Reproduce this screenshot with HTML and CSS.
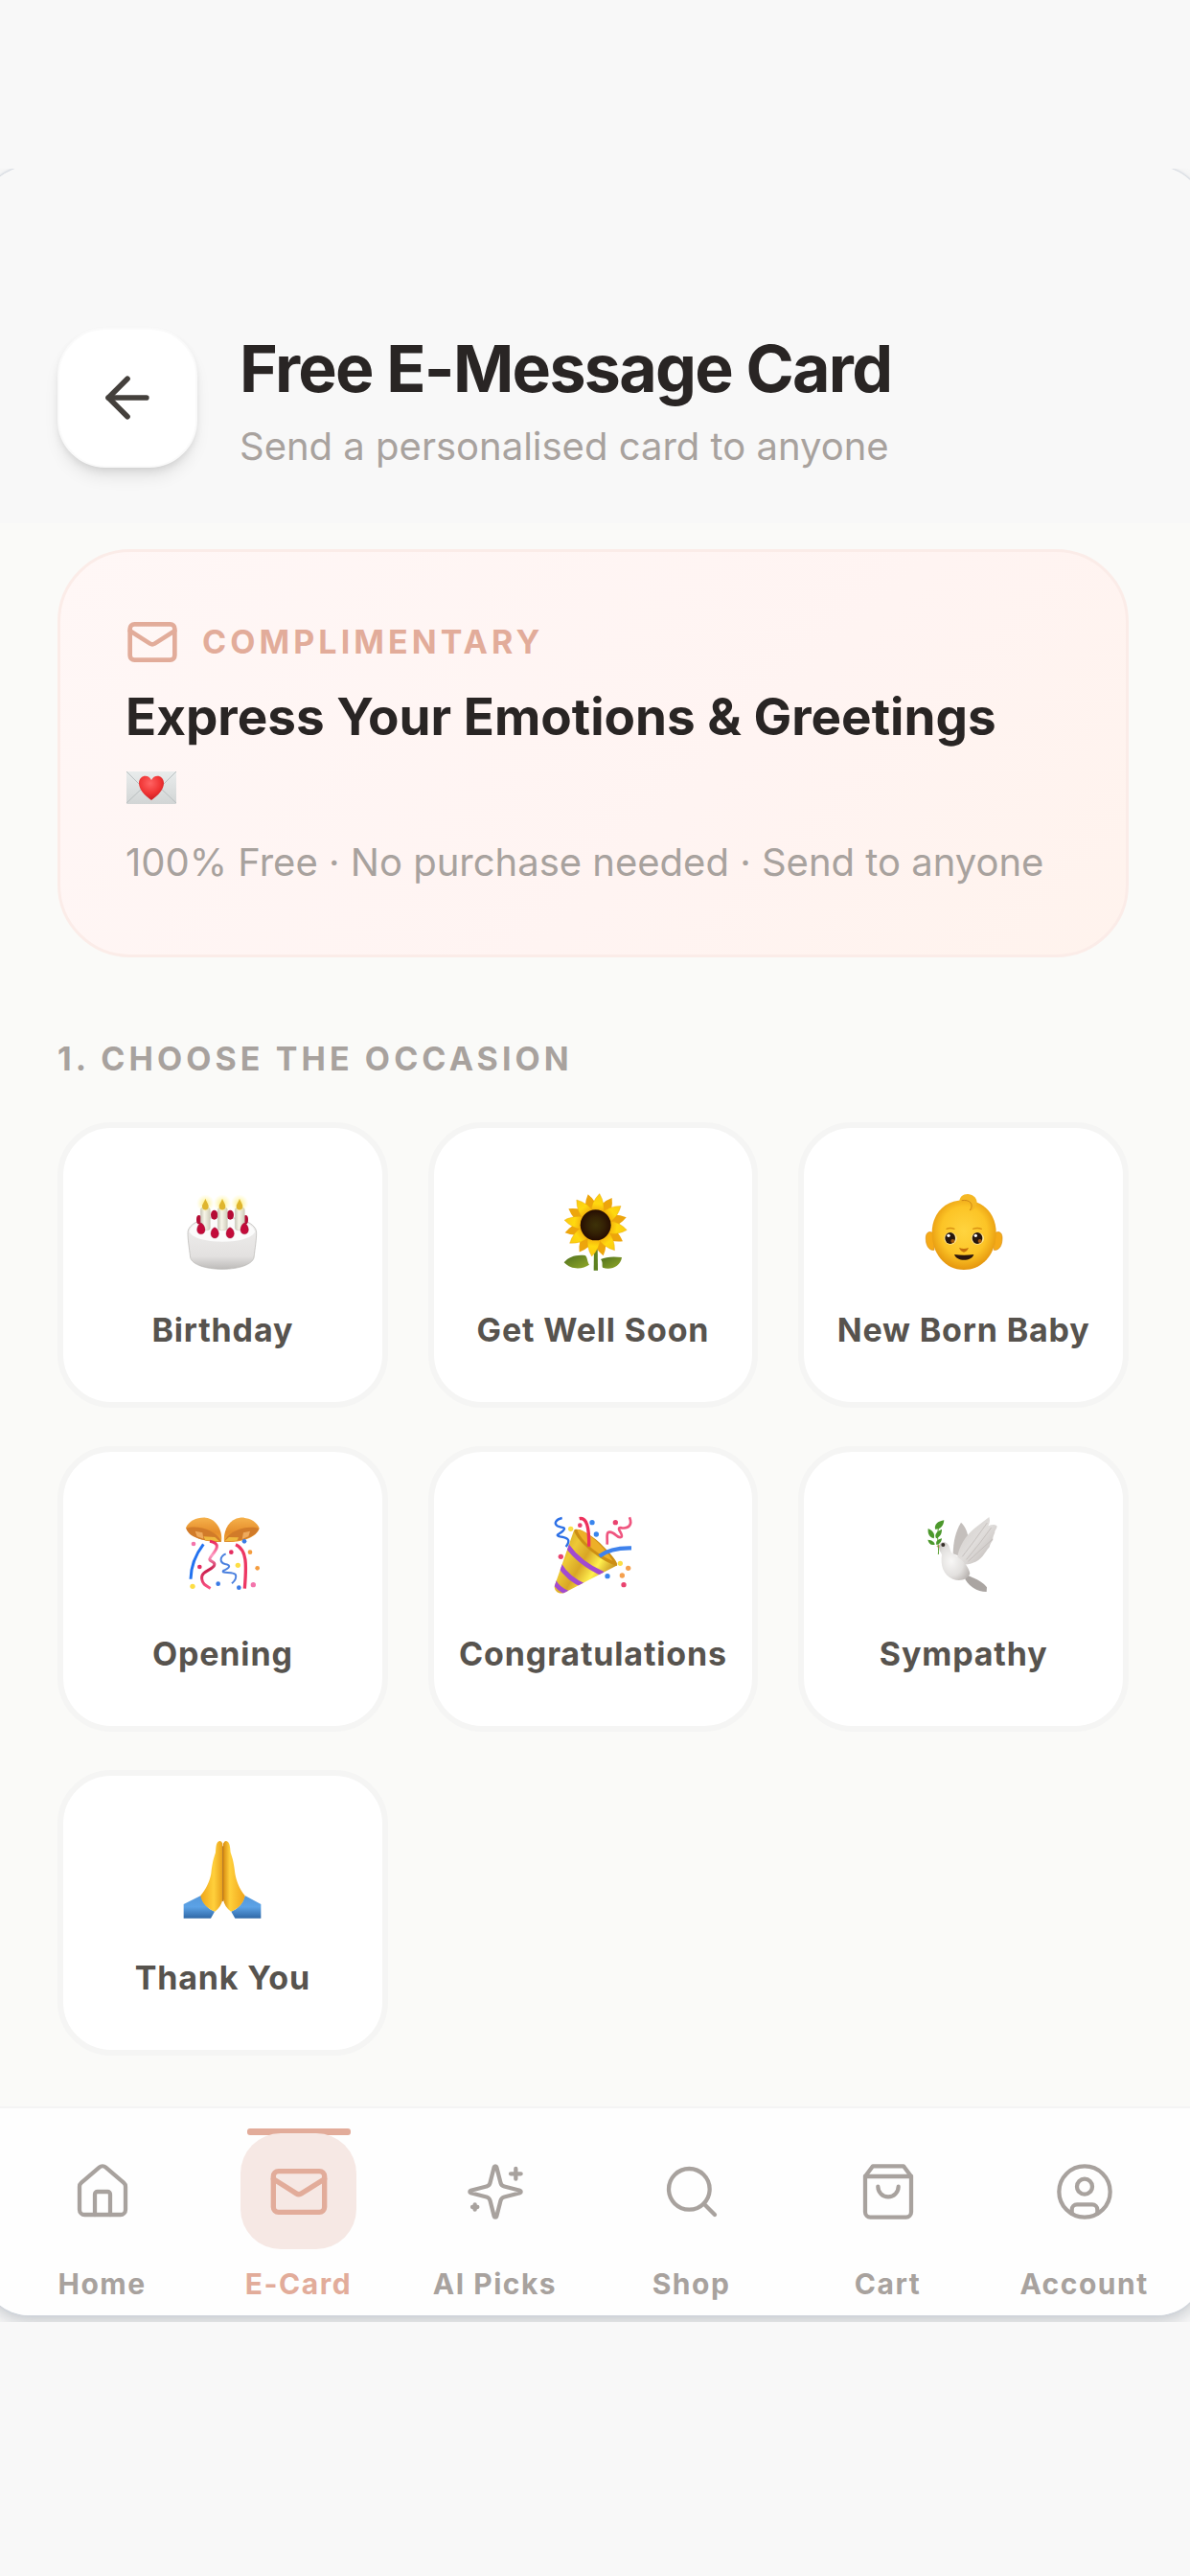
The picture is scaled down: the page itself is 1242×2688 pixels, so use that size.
FILE: index.html
```html
<!DOCTYPE html>
<html lang="en">
<head>
<meta charset="utf-8">
<meta name="viewport" content="width=device-width, initial-scale=1">
<title>Free E-Message Card</title>
<link rel="stylesheet" href="styles.css">
</head>
<body>
<div class="stage">
  <div class="phone">
    <header class="header">
      <button class="back" type="button" aria-label="Back">
        <svg class="icon icon-back" viewBox="0 0 24 24"><path d="m12 19-7-7 7-7"/><path d="M19 12H5"/></svg>
      </button>
      <div class="heading">
        <h1 class="title">Free E-Message Card</h1>
        <p class="subtitle">Send a personalised card to anyone</p>
      </div>
    </header>

    <main class="content">
      <section class="banner">
        <p class="eyebrow">
          <svg class="icon icon-mail" viewBox="0 0 24 24"><rect x="2" y="4" width="20" height="16" rx="2"/><path d="m22 7-8.97 5.7a1.94 1.94 0 0 1-2.06 0L2 7"/></svg>
          COMPLIMENTARY
        </p>
        <h2 class="banner-title">Express Your Emotions &amp; Greetings
          <svg class="letter" viewBox="0 0 54 36" role="img" aria-label="Love letter">
            <defs>
              <linearGradient id="paper" x1="0" y1="0" x2="0" y2="1"><stop offset="0" stop-color="#e9ecec"/><stop offset="1" stop-color="#d2d5d5"/></linearGradient>
              <radialGradient id="heart" cx=".45" cy=".3" r=".7"><stop offset="0" stop-color="#ff6363"/><stop offset=".6" stop-color="#f03434"/><stop offset="1" stop-color="#c91c22"/></radialGradient>
            </defs>
            <rect x="1" y="1" width="52" height="34" rx="1" fill="url(#paper)"/>
            <path d="M1 34 20 16M53 34 34 16M1 1l21 21q5 4 10 0L53 1" fill="none" stroke="#b9bfc0" stroke-width="1"/>
            <path d="M27 31C20 26 14 20 14 13c0-8 10-10 13-3 3-7 13-5 13 3 0 7-6 13-13 18z" fill="url(#heart)"/>
          </svg>
        </h2>
        <p class="banner-text">100% Free · No purchase needed · Send to anyone</p>
      </section>

      <h2 class="section-title">1. CHOOSE THE OCCASION</h2>

      <div class="grid">
        <button class="tile" type="button">
          <svg class="emoji" viewBox="61 63 252 252" aria-hidden="true">
            <defs>
              <linearGradient id="cake" x1="0" y1="0" x2="0" y2="1"><stop offset="0" stop-color="#f1f0ef"/><stop offset=".75" stop-color="#e3e1e0"/><stop offset="1" stop-color="#bdbbb9"/></linearGradient>
              <linearGradient id="candle" x1="0" y1="0" x2="1" y2="0"><stop offset="0" stop-color="#c9c7b8"/><stop offset=".4" stop-color="#f7f5e8"/><stop offset="1" stop-color="#d0cdbb"/></linearGradient>
              <radialGradient id="glow"><stop offset="0" stop-color="#ffe94f" stop-opacity=".8"/><stop offset="1" stop-color="#fff59a" stop-opacity="0"/></radialGradient>
            </defs>
            <path d="M79 193c0-28 45-49 107-49s108 21 108 49c0 22-4 45-8 78-5 21-46 36-99 36s-95-15-100-36c-4-33-8-56-8-78z" fill="url(#cake)" stroke="#b5b3b1" stroke-width="2"/>
            <path d="M84 190c3-23 44-42 102-42s99 19 103 42c-8 20-52 31-103 31S93 210 84 190z" fill="#fbfbfb"/>
            <g fill="#b50b35"><ellipse cx="114" cy="152" rx="8" ry="14"/><ellipse cx="162" cy="137" rx="11" ry="15"/><ellipse cx="212" cy="137" rx="11" ry="15"/><ellipse cx="260" cy="152" rx="8" ry="14"/></g>
            <g fill="url(#candle)" stroke="#bcb9a8"><rect x="119" y="114" width="30" height="71" rx="8"/><rect x="173" y="114" width="30" height="71" rx="8"/><rect x="227" y="114" width="30" height="71" rx="8"/></g>
            <g fill="url(#glow)"><circle cx="134" cy="101" r="28"/><circle cx="187" cy="101" r="28"/><circle cx="241" cy="101" r="28"/></g>
            <g fill="#dfb52d"><path d="M134 86c5 13 11 18 10 26-1 13-19 13-20 0-1-8 6-13 10-26z"/><path d="M187 86c5 13 11 18 10 26-1 13-19 13-20 0-1-8 6-13 10-26z"/><path d="M241 86c5 13 11 18 10 26-1 13-19 13-20 0-1-8 6-13 10-26z"/></g>
            <g fill="#c30b3a" stroke="#8c0829" stroke-width="1"><path d="M120 162c8 3 13 13 13 22 0 18-25 18-25 0 0-9 5-19 12-22z"/><path d="M163 176c8 3 13 11 13 20 0 19-25 19-25 0 0-9 5-17 12-20z"/><path d="M211 176c8 3 13 11 13 20 0 19-25 19-25 0 0-9 5-17 12-20z"/><path d="M256 162c8 3 13 13 13 22 0 18-25 18-25 0 0-9 5-19 12-22z"/></g>
          </svg>
          <span class="label">Birthday</span>
        </button>

        <button class="tile" type="button">
          <svg class="emoji" viewBox="52 63 252 252" aria-hidden="true">
            <defs>
              <linearGradient id="petal" x1="0" y1="1" x2="0" y2="0"><stop offset="0" stop-color="#f0a00c"/><stop offset=".5" stop-color="#ffd90f"/><stop offset="1" stop-color="#f9c914"/></linearGradient>
              <radialGradient id="seed"><stop offset="0" stop-color="#3d3208"/><stop offset=".5" stop-color="#352305"/><stop offset="1" stop-color="#260d02"/></radialGradient>
              <linearGradient id="leaf" x1="0" y1="0" x2="1" y2="1"><stop offset="0" stop-color="#4f7020"/><stop offset="1" stop-color="#92a928"/></linearGradient>
              <path id="ray" d="M166 134q-2-36 20-64 22 28 20 64z"/>
              <path id="ray-lit" d="M166 134q-2-36 20-64 22 28 20 64z" fill="url(#petal)"/>
            </defs>
            <path d="M181 230h11l1 81h-13z" fill="#5d8120"/>
            <path d="M87 286c14-18 40-26 66-22 8 5 6 20 13 29-21 15-55 18-79-7z" fill="url(#leaf)"/>
            <path d="M202 276c16-7 36-10 66-6-4 30-36 41-60 32-3-7 2-16-6-26z" fill="url(#leaf)"/>
            <g fill="#eda50c">
              <use href="#ray" transform="rotate(-14 186 169)"/><use href="#ray" transform="rotate(31 186 169)"/><use href="#ray" transform="rotate(76 186 169)"/><use href="#ray" transform="rotate(121 186 169)"/><use href="#ray" transform="rotate(166 186 169)"/><use href="#ray" transform="rotate(211 186 169)"/><use href="#ray" transform="rotate(256 186 169)"/><use href="#ray" transform="rotate(301 186 169)"/>
            </g>
            <g stroke="#e5a00a" stroke-width="1">
              <use href="#ray-lit" transform="rotate(7 186 169)"/><use href="#ray-lit" transform="rotate(53 186 169)"/><use href="#ray-lit" transform="rotate(99 186 169)"/><use href="#ray-lit" transform="rotate(143 186 169)"/><use href="#ray-lit" transform="rotate(187 186 169)"/><use href="#ray-lit" transform="rotate(235 186 169)"/><use href="#ray-lit" transform="rotate(279 186 169)"/><use href="#ray-lit" transform="rotate(323 186 169)"/>
            </g>
            <circle cx="186" cy="169" r="48" fill="url(#seed)"/>
          </svg>
          <span class="label">Get Well Soon</span>
        </button>

        <button class="tile" type="button">
          <svg class="emoji" viewBox="1213 63 252 252" aria-hidden="true">
            <defs>
              <radialGradient id="skin" cx=".5" cy=".45" r=".55"><stop offset="0" stop-color="#ffd43f"/><stop offset=".65" stop-color="#fcc426"/><stop offset="1" stop-color="#e5960e"/></radialGradient>
            </defs>
            <g fill="#f5aa18" stroke="#d98d0d" stroke-width="2"><path d="M1243 194c-14-8-23-1-23 16 0 23 9 39 26 37z"/><path d="M1436 194c14-8 23-1 23 16 0 23-9 39-26 37z"/></g>
            <path d="M1339 91c66 0 101 48 101 102 0 64-40 116-101 116s-100-52-100-116c0-54 35-102 100-102z" fill="url(#skin)"/>
            <path d="M1325 96c0-16 13-25 27-24 18 1 31 17 27 31-2 11-10 19-21 22 9-14 5-26-11-30-8-2-14-1-22 1z" fill="#f5b824"/>
            <path d="M1332 92c25-4 40 11 26 31" fill="none" stroke="#cf8615" stroke-width="3"/>
            <g fill="none" stroke="#d99112" stroke-width="4" stroke-linecap="round"><path d="M1285 181q11-5 24 0M1368 181q13-5 26 0"/></g>
            <g fill="#ffe591"><ellipse cx="1297" cy="211" rx="20" ry="19"/><ellipse cx="1382" cy="211" rx="20" ry="19"/></g>
            <g fill="#26160c"><ellipse cx="1296" cy="210" rx="16" ry="18"/><ellipse cx="1381" cy="210" rx="16" ry="18"/></g>
            <g fill="#a2570d"><circle cx="1304" cy="219" r="6"/><circle cx="1389" cy="219" r="6"/></g>
            <g fill="#fff"><circle cx="1291" cy="202" r="5"/><circle cx="1376" cy="202" r="5"/></g>
            <path d="M1324 240q8 3 15 3t15-3q-5 12-15 14-10-2-15-14z" fill="#c56f0c"/>
            <path d="M1309 261q30 5 61 0c-5 22-54 24-61 0z" fill="#2b160d"/>
          </svg>
          <span class="label">New Born Baby</span>
        </button>

        <button class="tile" type="button">
          <svg class="emoji" viewBox="61 60 252 252" aria-hidden="true">
            <defs>
              <linearGradient id="bowl" x1="0" y1="0" x2="0" y2="1"><stop offset="0" stop-color="#f5b14b"/><stop offset=".6" stop-color="#e58d2b"/><stop offset="1" stop-color="#f0a735"/></linearGradient>
              <linearGradient id="ribbon" x1="0" y1="0" x2="0" y2="1"><stop offset="0" stop-color="#e9265c"/><stop offset=".3" stop-color="#ff9cc4"/><stop offset=".6" stop-color="#c81e4c"/><stop offset="1" stop-color="#fb5384"/></linearGradient>
            </defs>
            <path d="M73 100c9-22 36-34 62-32 34 3 54 42 49 75-30 5-96-7-111-43z" fill="url(#bowl)"/>
            <path d="M303 101c-8-22-34-35-61-33-34 3-53 42-49 75 30 5 98-5 110-42z" fill="url(#bowl)"/>
            <g fill="#d17b29"><path d="M74 101c34-12 95 5 110 42-39 1-102-9-110-42z"/><path d="M302 102c-32-12-94 4-109 41 38 1 99-10 109-41z"/></g>
            <g fill="#eeaa5c"><path d="M102 110l23 5 3 19-20-7zM274 110l-21 5-4 20 20-8z"/></g>
            <path d="M128 127l36 2 14 13-44-3zM194 142l14-13 30 1-5 10z" fill="#efb93e"/>
            <path d="M128 151q-39 51-40 109" fill="none" stroke="#2373f0" stroke-width="9"/>
            <path d="M148 142c42 8 13 34 2 50s18 10 12 25-43 18-39 43c2 17 13 21 27 29" fill="none" stroke="url(#ribbon)" stroke-width="9"/>
            <path d="M229 152c36 16 34 65 28 138" fill="none" stroke="#ed3763" stroke-width="10"/>
            <path d="M198 181c-20 9-20 27-2 32 24 5 9 14-6 21-8 10 34 1 39 13 3 9-2 18-12 27" fill="none" stroke="#4b81df" stroke-width="6"/>
            <g fill="#3a7be5"><circle cx="256" cy="142" r="7"/><circle cx="174" cy="275" r="7"/><circle cx="239" cy="287" r="7"/></g>
            <g fill="#e42e61"><circle cx="116" cy="222" r="7"/><circle cx="215" cy="176" r="7"/></g>
            <g fill="#f374ab"><circle cx="97" cy="150" r="7"/><circle cx="284" cy="278" r="8"/></g>
            <g fill="#fdde44"><circle cx="94" cy="283" r="8"/><circle cx="236" cy="217" r="8"/></g>
            <g fill="#f49c3e"><circle cx="274" cy="176" r="7"/><circle cx="297" cy="226" r="7"/></g>
          </svg>
          <span class="label">Opening</span>
        </button>

        <button class="tile" type="button">
          <svg class="emoji" viewBox="52 60 252 252" aria-hidden="true">
            <defs>
              <linearGradient id="cone" x1="0" y1="0" x2="1" y2=".6"><stop offset="0" stop-color="#cc9218"/><stop offset=".35" stop-color="#edc936"/><stop offset=".55" stop-color="#d9a625"/><stop offset=".75" stop-color="#fff04f"/><stop offset="1" stop-color="#bd8115"/></linearGradient>
              <clipPath id="cone-clip"><path d="M118 108q46 58 136 109L88 303c-15 6-32-3-31-20z"/></clipPath>
            </defs>
            <path d="M118 108q46 58 136 109L88 303c-15 6-32-3-31-20z" fill="url(#cone)"/>
            <g clip-path="url(#cone-clip)" fill="none" stroke="#a24ad0" stroke-width="15"><path d="M96 155q39 56 113 89M72 215q28 46 80 67M53 263q14 29 45 40"/></g>
            <path d="M118 108c8-13 56 12 93 51 27 27 47 51 42 59-41-7-124-72-135-110z" fill="#cc8e14"/>
            <path d="M128 106c9-5 39 15 66 41 23 22 40 45 45 56-40-14-101-63-111-97z" fill="#edaf27"/>
            <path d="M135 71c23-5 31 26 30 87" fill="none" stroke="#ed315c" stroke-width="10"/>
            <path d="M198 188c27-20 58-26 100-25" fill="none" stroke="#3f82ec" stroke-width="13"/>
            <path d="M81 69c-19 4-27 17-15 25 10 6 31 2 18 15-11 11-28 13-10 18 20 3 38 8 19 32" fill="none" stroke="#2d70e6" stroke-width="7"/>
            <path d="M292 67c10 24-3 36-24 33-23-4 6 21-1 28-12 9-19-15-37-15-13 0-6 22-8 39" fill="none" stroke="#ef557f" stroke-width="8"/>
            <g fill="#3985ed"><circle cx="175" cy="83" r="8"/><circle cx="188" cy="120" r="8"/><circle cx="223" cy="251" r="8"/></g>
            <g fill="#e9436f"><circle cx="77" cy="190" r="8"/><circle cx="248" cy="83" r="8"/><circle cx="137" cy="92" r="7"/><circle cx="274" cy="278" r="8"/></g>
            <g fill="#fbdf45"><circle cx="108" cy="103" r="8"/><circle cx="263" cy="211" r="8"/></g>
            <g fill="#f5a04d"><circle cx="288" cy="226" r="8"/><circle cx="269" cy="249" r="8"/></g>
          </svg>
          <span class="label">Congratulations</span>
        </button>

        <button class="tile" type="button">
          <svg class="emoji" viewBox="1213 60 252 252" aria-hidden="true">
            <defs>
              <linearGradient id="wing" x1="0" y1="0" x2="1" y2="1"><stop offset="0" stop-color="#d1cdca"/><stop offset=".5" stop-color="#e0dddb"/><stop offset="1" stop-color="#b8b2af"/></linearGradient>
              <radialGradient id="dove" cx=".4" cy=".5" r=".65"><stop offset="0" stop-color="#f8f7f6"/><stop offset=".6" stop-color="#e2e0de"/><stop offset="1" stop-color="#bab5b2"/></radialGradient>
            </defs>
            <path d="M1305 181c1-39 8-70 25-98 11 10 18 23 22 43l-15 67z" fill="#c4bfbc"/>
            <path d="M1318 194c7-40 27-73 66-102l34-26c4 12 1 20-3 28 12-5 23-5 28 1-2 10-9 14-7 20-4 9-7 15-6 23-6 7-9 13-11 22-8 8-11 16-21 28-15 17-32 25-56 27z" fill="url(#wing)"/>
            <path d="M1347 199q42-49 78-100M1352 205q38-35 77-70M1334 190q41-53 78-106" fill="none" stroke="#b9b4b0" stroke-width="2"/>
            <path d="M1344 245c21 11 50 18 67 41l-1 14c-29 0-52-15-67-39z" fill="#aaa5a2"/>
            <path d="M1261 160c0-14 17-20 27-10 9 9 5 25 19 32 25 15 48 38 51 61-8 20-32 25-54 17-30-12-39-44-34-76-4-8-9-14-9-24z" fill="url(#dove)"/>
            <circle cx="1274" cy="153" r="6" fill="#342e29"/>
            <path d="M1263 153l-10 4 9 7z" fill="#e5927d"/>
            <path d="M1259 183c3-26-6-43 0-81" fill="none" stroke="#5ea335" stroke-width="3"/>
            <g fill="#4c982c"><path d="M1277 76c-20 3-31 13-28 28 17 1 26-10 28-28z"/><path d="M1227 102c17 8 22 17 18 31-14-4-20-14-18-31z"/><path d="M1270 104c-17 8-24 16-18 29 13-5 18-15 18-29z"/><path d="M1226 137c14 1 21 7 22 15-12 4-20-4-22-15z"/><path d="M1270 133c-14 3-20 10-17 20 11-2 16-10 17-20z"/></g>
          </svg>
          <span class="label">Sympathy</span>
        </button>

        <button class="tile" type="button">
          <svg class="emoji" viewBox="61 53 252 252" aria-hidden="true">
            <defs>
              <linearGradient id="hand-left" x1="0" y1="0" x2="1" y2="0"><stop offset="0" stop-color="#efa51a"/><stop offset=".6" stop-color="#ffd03b"/><stop offset="1" stop-color="#e8a01b"/></linearGradient>
              <linearGradient id="hand-right" x1="0" y1="0" x2="1" y2="0"><stop offset="0" stop-color="#d98c12"/><stop offset=".3" stop-color="#ffd03b"/><stop offset="1" stop-color="#f0a41b"/></linearGradient>
              <linearGradient id="sleeve" x1="0" y1="0" x2="0" y2="1"><stop offset="0" stop-color="#5598da"/><stop offset=".5" stop-color="#5ba2e6"/><stop offset="1" stop-color="#2f68a6"/></linearGradient>
            </defs>
            <path d="M66 257l54-27q9 37 43 50l-12 21H66zM308 257l-50-27q-9 37-43 50l12 21h81z" fill="url(#sleeve)"/>
            <path d="M173 62q10-8 15 5v175c-2 15-11 28-24 38-25-9-41-27-45-50 17-20 29-45 33-69 3-30 8-49 14-66 1-12 1-27 7-33z" fill="url(#hand-left)"/>
            <path d="M205 62q-10-8-15 5v175c2 15 11 28 24 38 25-9 40-27 44-50-17-20-27-45-31-69-3-30-8-49-14-66-1-12-2-27-8-33z" fill="url(#hand-right)"/>
            <path d="M189 75v173" stroke="#b06c10" stroke-width="3"/>
          </svg>
          <span class="label">Thank You</span>
        </button>
      </div>
    </main>

    <nav class="nav" aria-label="Main">
      <a class="nav-item" href="#home"><span class="pill"><svg class="icon icon-nav" viewBox="0 0 24 24"><path d="M15 21v-8a1 1 0 0 0-1-1h-4a1 1 0 0 0-1 1v8"/><path d="M3 10a2 2 0 0 1 .709-1.528l7-5.999a2 2 0 0 1 2.582 0l7 5.999A2 2 0 0 1 21 10v9a2 2 0 0 1-2 2H5a2 2 0 0 1-2-2z"/></svg></span>Home</a>
      <a class="nav-item active" href="#ecard" aria-current="page"><span class="pill"><svg class="icon icon-nav" viewBox="0 0 24 24"><rect x="2" y="4" width="20" height="16" rx="2"/><path d="m22 7-8.97 5.7a1.94 1.94 0 0 1-2.06 0L2 7"/></svg></span>E-Card</a>
      <a class="nav-item" href="#picks"><span class="pill"><svg class="icon icon-nav" viewBox="0 0 24 24"><path d="M9.937 15.5A2 2 0 0 0 8.5 14.063l-6.135-1.582a.5.5 0 0 1 0-.962L8.5 9.936A2 2 0 0 0 9.937 8.5l1.582-6.135a.5.5 0 0 1 .963 0L14.063 8.5A2 2 0 0 0 15.5 9.937l6.135 1.581a.5.5 0 0 1 0 .964L15.5 14.063a2 2 0 0 0-1.437 1.437l-1.582 6.135a.5.5 0 0 1-.963 0z"/><path d="M20 3v4M22 5h-4M4 17v2M5 18H3"/></svg></span>AI Picks</a>
      <a class="nav-item" href="#shop"><span class="pill"><svg class="icon icon-nav" viewBox="0 0 24 24"><circle cx="11" cy="11" r="8"/><path d="m21 21-4.300-4.300"/></svg></span>Shop</a>
      <a class="nav-item" href="#cart"><span class="pill"><svg class="icon icon-nav" viewBox="0 0 24 24"><path d="M6 2 3 6v14a2 2 0 0 0 2 2h14a2 2 0 0 0 2-2V6l-3-4Z"/><path d="M3 6h18"/><path d="M16 10a4 4 0 0 1-8 0"/></svg></span>Cart</a>
      <a class="nav-item" href="#account"><span class="pill"><svg class="icon icon-nav" viewBox="0 0 24 24"><circle cx="12" cy="12" r="10"/><circle cx="12" cy="10" r="3"/><path d="M7 20.662V19a2 2 0 0 1 2-2h6a2 2 0 0 1 2 2v1.662"/></svg></span>Account</a>
    </nav>
  </div>
</div>
</body>
</html>
```
FILE: styles.css
```css
* {
  box-sizing: border-box;
}

body {
  margin: 0;
  padding: 176px 0;
  background: #f8f8f8;
  font-family: Inter, "Liberation Sans", sans-serif;
  color: #292524;
}

h1, h2, p {
  margin: 0;
}

/* The device frame is wider than the window, so only its corners show. */
.stage {
  overflow: hidden;
  padding-bottom: 7px;
}

.phone {
  margin: -2px -14px 0 -18px;
  border-radius: 48px;
  overflow: hidden;
  background: #fafaf8;
  box-shadow: 0 0 2px 1px #cdd3dc, 0 8px 16px rgba(100, 110, 120, 0.3);
}

.icon {
  flex: none;
  fill: none;
  stroke: currentColor;
  stroke-width: 2;
  stroke-linecap: round;
  stroke-linejoin: round;
}

/* Header */
.header {
  display: flex;
  align-items: flex-start;
  gap: 44px;
  padding: 168px 78px 50px;
  background: #f8f8f8;
}

.back {
  display: grid;
  place-items: center;
  flex: none;
  width: 146px;
  height: 146px;
  padding: 0;
  border: 2px solid #fafafa;
  border-radius: 50px;
  background: #fff;
  color: #44403c;
  box-shadow: 0 12px 18px -4px rgba(0, 0, 0, 0.1), 0 4px 8px -2px rgba(0, 0, 0, 0.1);
}

.icon-back {
  width: 68px;
  height: 68px;
}

.heading {
  display: grid;
  gap: 16px;
  padding-top: 6px;
}

.title {
  font-size: 68px;
  line-height: 72px;
  font-weight: 700;
  letter-spacing: -0.025em;
}

.subtitle,
.banner-text {
  font-size: 40px;
  line-height: 60px;
  color: #a8a29e;
}

/* Content */
.content {
  padding: 27px 78px 53px;
}

.banner {
  display: grid;
  gap: 14px;
  padding: 66px 68px;
  border: 3px solid #fbece8;
  border-radius: 76px;
  background: linear-gradient(135deg, #fff7f6 0%, #fff4f2 60%, #fff3ed 100%);
}

.eyebrow {
  display: flex;
  align-items: center;
  gap: 24px;
  color: #e2ac9a;
}

.eyebrow,
.section-title {
  font-size: 34px;
  line-height: 48px;
  font-weight: 700;
  letter-spacing: 0.12em;
}

.icon-mail {
  width: 56px;
  height: 56px;
}

.banner-title {
  font-size: 53px;
  line-height: 72px;
  font-weight: 700;
}

.letter {
  display: block;
  width: 54px;
  height: 36px;
  margin: 20px 0 16px;
}

.section-title {
  padding: 82px 0 42px;
  color: #a8a29e;
}

.grid {
  display: grid;
  grid-template-columns: repeat(3, 1fr);
  gap: 40px 42px;
}

.tile {
  display: flex;
  flex-direction: column;
  align-items: center;
  gap: 37px;
  padding: 66px 0 51px;
  border: 6px solid #f5f5f4;
  border-radius: 56px;
  background: #fff;
  color: #57534e;
  font-family: inherit;
}

.emoji {
  width: 84px;
  height: 84px;
}

.label {
  font-size: 34px;
  line-height: 48px;
  font-weight: 700;
  letter-spacing: 0.025em;
  white-space: nowrap;
}

/* Bottom navigation */
.nav {
  display: grid;
  grid-template-columns: repeat(6, 1fr);
  padding: 0 22px;
  border-top: 2px solid #f4f4f4;
  background: #fefefe;
}

.nav-item {
  position: relative;
  display: flex;
  flex-direction: column;
  align-items: center;
  gap: 18px;
  padding: 26px 0 15px;
  color: #a8a29e;
  font-size: 30px;
  line-height: 36px;
  font-weight: 700;
  letter-spacing: 0.05em;
  text-decoration: none;
}

.pill {
  position: relative;
  display: grid;
  place-items: center;
  width: 121px;
  height: 121px;
  border-radius: 42px;
}

.icon-nav {
  width: 64px;
  height: 64px;
  stroke-width: 1.6;
}

.active {
  color: #e2ac9a;
}

.active .pill {
  background: #f6e8e4;
}

.active .icon-nav {
  stroke-width: 2;
}

.active::before {
  content: "";
  position: absolute;
  top: 21px;
  width: 108px;
  height: 7px;
  border-radius: 3px;
  background: #e2ac9a;
}
```
